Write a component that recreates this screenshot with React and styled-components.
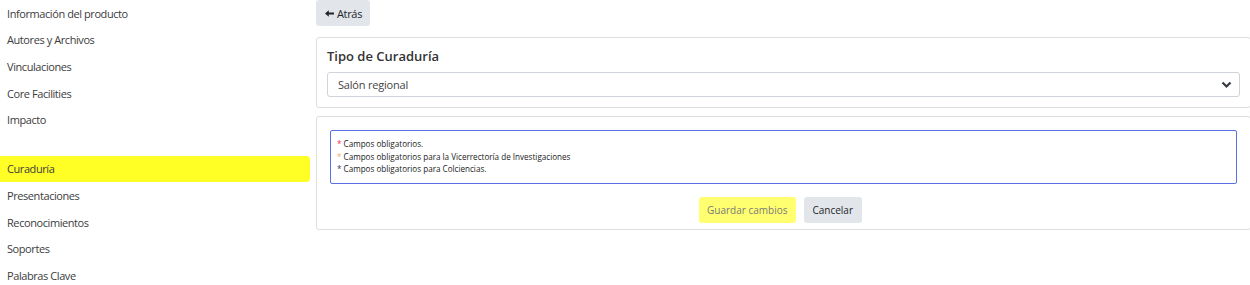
import React from "react";
import styled, { createGlobalStyle } from "styled-components";

const GlobalStyle = createGlobalStyle`
  html, body {
    margin: 0;
    padding: 0;
    overflow: hidden;
    background: #fff;
  }
  body {
    font-family: "Open Sans", "Noto Sans", sans-serif;
    color: #212529;
  }
`;

const sections = [
  ["Información del producto", "Autores y Archivos", "Vinculaciones", "Core Facilities", "Impacto"],
  ["Curaduría", "Presentaciones", "Reconocimientos", "Soportes", "Palabras Clave"],
];

const notes = [
  { color: "#e8315b", text: "Campos obligatorios." },
  { color: "#f3a977", text: "Campos obligatorios para la Vicerrectoría de Investigaciones" },
  { color: "#2c3e6b", text: "Campos obligatorios para Colciencias." },
];

function App() {
  return (
    <>
      <GlobalStyle />
      <Layout>
        <Sidebar>
          {sections.map((group, i) => (
            <NavGroup key={i}>
              {group.map((label) => (
                <NavItem key={label} $active={label === "Curaduría"}>
                  {label}
                </NavItem>
              ))}
            </NavGroup>
          ))}
        </Sidebar>
        <Main>
          <Toolbar>
            <BackButton>
              <svg width="9" height="7" viewBox="0 0 9 7">
                <path d="M0 3.5 L3.8 0.3 L3.8 2.6 L9 2.6 L9 4.4 L3.8 4.4 L3.8 6.7 Z" fill="#212529" />
              </svg>
              Atrás
            </BackButton>
          </Toolbar>
          <Card>
            <CardTitle>Tipo de Curaduría</CardTitle>
            <Select>
              <span>Salón regional</span>
              <svg width="11" height="8" viewBox="0 0 11 8">
                <path d="M1.5 1.5 L5.5 5.5 L9.5 1.5" fill="none" stroke="#343a40" strokeWidth="2.2" />
              </svg>
            </Select>
          </Card>
          <Card $padded>
            <NoteBox>
              {notes.map((n) => (
                <Note key={n.text}>
                  <Star $color={n.color}>*</Star> {n.text}
                </Note>
              ))}
            </NoteBox>
            <Actions>
              <SaveButton>Guardar cambios</SaveButton>
              <CancelButton>Cancelar</CancelButton>
            </Actions>
          </Card>
        </Main>
      </Layout>
    </>
  );
}

export default App;

const Layout = styled.div`
  display: grid;
  grid-template-columns: 310px 935px;
  column-gap: 6px;
  width: 1251px;
`;

const Sidebar = styled.nav`
  display: flex;
  flex-direction: column;
  gap: 22.3px;
`;

const NavGroup = styled.div`
  display: flex;
  flex-direction: column;
`;

const NavItem = styled.div`
  height: 26.67px;
  display: flex;
  align-items: center;
  padding-left: 7px;
  font-size: 11px;
  letter-spacing: -0.42px;
  color: #3c3c3c;
  background: ${(p) => (p.$active ? "#ffff26" : "transparent")};
  border-radius: 0 4px 4px 0;
`;

const Main = styled.main`
  display: flex;
  flex-direction: column;
  gap: 8px;
`;

const Toolbar = styled.div`
  display: flex;
  margin-bottom: 3px;
`;

const BackButton = styled.button`
  height: 26px;
  width: 54px;
  border: none;
  border-radius: 3px;
  background: #e2e6ea;
  font-family: inherit;
  font-size: 11px;
  letter-spacing: -0.3px;
  color: #212529;
  padding: 0 0 0 1px;
  display: flex;
  align-items: center;
  justify-content: center;
  gap: 3px;
`;

const Card = styled.section`
  border: 1px solid #dedede;
  border-radius: 3px;
  padding: ${(p) => (p.$padded ? "13px 13px 6px" : "8px 10px 10px")};
  display: flex;
  flex-direction: column;
  height: ${(p) => (p.$padded ? "auto" : "71px")};
  box-sizing: border-box;
`;

const CardTitle = styled.h3`
  margin: 0 0 6px;
  font-size: 13px;
  font-weight: 600;
  line-height: 20px;
  color: #333;
`;

const Select = styled.div`
  height: 25px;
  box-sizing: border-box;
  border: 1px solid #ced4da;
  border-radius: 3px;
  display: flex;
  align-items: center;
  justify-content: space-between;
  padding: 0 7px 0 10px;
  font-size: 11px;
  letter-spacing: -0.2px;
  color: #444;
`;

const NoteBox = styled.div`
  border: 1px solid #5b6fe6;
  border-radius: 2px;
  padding: 7px 6px 7px;
`;

const Note = styled.div`
  font-size: 8.1px;
  line-height: 12.5px;
  color: #222;
`;

const Star = styled.span`
  color: ${(p) => p.$color};
`;

const Actions = styled.div`
  display: flex;
  justify-content: center;
  gap: 8px;
  margin-top: 13px;
  padding-right: 7px;
`;

const ActionButton = styled.button`
  height: 26px;
  border: none;
  border-radius: 3px;
  font-family: inherit;
  font-size: 10px;
  padding: 0 8.5px;
`;

const SaveButton = styled(ActionButton)`
  background: #ffff70;
  color: #7a7a7a;
`;

const CancelButton = styled(ActionButton)`
  background: #e2e6ea;
  color: #212529;
`;
